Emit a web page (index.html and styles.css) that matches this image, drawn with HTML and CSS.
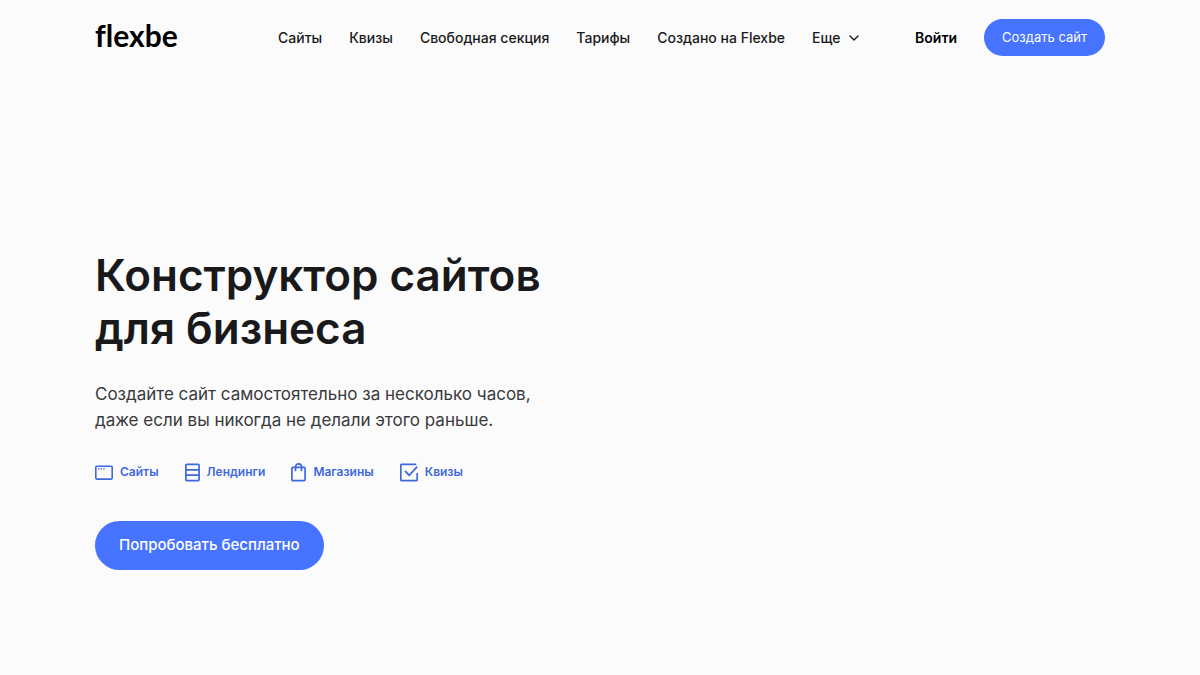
FILE: index.html
```html
<!DOCTYPE html>
<html lang="ru">
<head>
<meta charset="utf-8">
<meta name="viewport" content="width=device-width, initial-scale=1">
<title>Flexbe</title>
<link rel="stylesheet" href="styles.css">
</head>
<body>
<header class="header container">
  <a class="logo" href="#">flexbe</a>
  <nav class="nav">
    <a href="#">Сайты</a>
    <a href="#">Квизы</a>
    <a href="#">Свободная секция</a>
    <a href="#">Тарифы</a>
    <a href="#">Создано на Flexbe</a>
    <button class="more" type="button">Еще
      <svg width="10" height="6" viewBox="0 0 10 6" fill="none" stroke="currentColor" stroke-width="1.4" stroke-linecap="round" stroke-linejoin="round" aria-hidden="true"><path d="M1 1l4 4 4-4"/></svg>
    </button>
  </nav>
  <div class="account">
    <a class="login" href="#">Войти</a>
    <a class="button button-small" href="#">Создать сайт</a>
  </div>
</header>
<main class="hero container">
  <h1>Конструктор сайтов<br>для бизнеса</h1>
  <p class="lead">Создайте сайт самостоятельно за несколько часов,<br>даже если вы никогда не делали этого раньше.</p>
  <ul class="products">
    <li><a href="#"><svg width="18" height="20" viewBox="0 0 18 20" fill="none" stroke="currentColor" stroke-width="1.6" aria-hidden="true"><rect x="0.8" y="4.3" width="16.4" height="12.8" rx="1"/><path d="M3 6.8h1.5M5.6 6.8h1.5M8.2 6.8h1.5" stroke-width="1.2"/></svg>Сайты</a></li>
    <li><a href="#"><svg width="15" height="20" viewBox="0 0 15 20" fill="none" stroke="currentColor" stroke-width="1.7" aria-hidden="true"><rect x="0.9" y="2.4" width="13.2" height="16.2" rx="1"/><path d="M1 7.8h13M1 13.2h13"/></svg>Лендинги</a></li>
    <li><a href="#"><svg width="15" height="20" viewBox="0 0 15 20" fill="none" stroke="currentColor" stroke-width="1.7" aria-hidden="true"><rect x="0.9" y="5.4" width="13.2" height="13.2" rx="1"/><path d="M4.5 8.4V4.9a3 3 0 0 1 6 0V8.4" stroke-linecap="round"/></svg>Магазины</a></li>
    <li><a href="#"><svg width="18" height="20" viewBox="0 0 18 20" fill="none" stroke="currentColor" stroke-width="1.7" stroke-linejoin="round" aria-hidden="true"><path d="M16.2 2.4H1.8a1 1 0 0 0-1 1v14.2a1 1 0 0 0 1 1h14.4a1 1 0 0 0 1-1V11"/><path d="M5 8.8l4.2 4.5 8-8.6"/></svg>Квизы</a></li>
  </ul>
  <a class="button button-large" href="#">Попробовать бесплатно</a>
</main>
</body>
</html>
```

FILE: styles.css
```css
* { box-sizing: border-box; }

body {
  margin: 0;
  background: #fbfbfb;
  color: #19191b;
  font-family: Inter, "Liberation Sans", sans-serif;
}

a { color: inherit; text-decoration: none; }

.container {
  width: 100%;
  max-width: 1050px;
  margin: 0 auto;
  padding: 0 20px;
}

.header {
  display: flex;
  align-items: center;
  min-height: 75px;
}

.logo {
  width: 83px;
  color: #000;
  font: 700 30px/36px Lato, sans-serif;
  font-variant-ligatures: none;
  padding-bottom: 6px;
}

.nav {
  display: flex;
  align-items: center;
  gap: 27px;
  margin-left: 100px;
  font-size: 14px;
  font-weight: 500;
  line-height: 20px;
  white-space: nowrap;
}

.more {
  display: flex;
  align-items: center;
  gap: 8px;
  padding: 0;
  border: 0;
  background: none;
  color: inherit;
  font: inherit;
}

.account {
  display: flex;
  align-items: center;
  gap: 27px;
  margin-left: auto;
  white-space: nowrap;
}

.login {
  color: #000;
  font-size: 14px;
  font-weight: 600;
}

.button {
  display: inline-block;
  border-radius: 25px;
  background: #4673ff;
  color: #fff;
  text-align: center;
}

.button-small {
  padding: 8px 18px 9px;
  font-size: 13px;
  line-height: 20px;
}

.button-large {
  padding: 12px 24px 13px;
  font-size: 15px;
  font-weight: 500;
  line-height: 24px;
}

.hero { padding-top: 174px; }

h1 {
  margin: 0;
  font-size: 44px;
  font-weight: 600;
  line-height: 53px;
}

.lead {
  margin: 26px 0 0;
  color: #39393d;
  font-size: 17px;
  line-height: 26px;
}

.products {
  display: flex;
  flex-wrap: wrap;
  gap: 26px;
  margin: 29px 0 39px;
  padding: 0;
  list-style: none;
  color: #3f68dc;
  font-size: 12px;
  font-weight: 600;
  line-height: 20px;
}

.products a {
  display: flex;
  align-items: center;
  gap: 7px;
}
```
